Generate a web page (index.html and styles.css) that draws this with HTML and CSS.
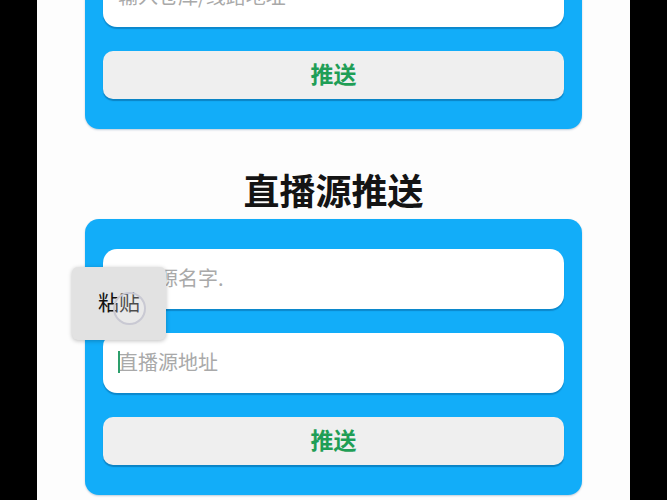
FILE: index.html
```html
<!DOCTYPE html>
<html lang="zh">
<head>
<meta charset="utf-8">
<link rel="stylesheet" href="styles.css">
</head>
<body>
<div class="screen">
  <div class="page">
    <section class="card">
      <input class="field" type="text" placeholder="输入仓库/线路地址">
      <button class="push">推送</button>
    </section>
    <h2 class="title">直播源推送</h2>
    <section class="card">
      <input class="field" type="text" placeholder="直播源名字.">
      <div class="field-wrap">
        <input class="field" type="text" placeholder="直播源地址">
        <span class="caret"></span>
      </div>
      <button class="push">推送</button>
    </section>
  </div>
  <div class="paste-menu">粘贴</div>
  <div class="touch"></div>
</div>
</body>
</html>
```
FILE: styles.css
```css
html, body {
  margin: 0;
  padding: 0;
  background: #000;
  height: 100%;
  overflow: hidden;
}
body {
  font-family: "Noto Sans CJK SC", "Noto Sans", sans-serif;
}
.screen {
  position: relative;
  width: 593px;
  height: 500px;
  margin-left: 37px;
  background: #fdfdfd;
  overflow: hidden;
}
.page {
  margin-top: -63px;
  display: flex;
  flex-direction: column;
  align-items: center;
}
.card {
  width: 497px;
  box-sizing: border-box;
  background: #12adf9;
  border-radius: 14px;
  padding: 30px 18px;
  display: flex;
  flex-direction: column;
  gap: 24px;
  box-shadow: 0 1px 2px rgba(0, 60, 110, 0.25);
}
.field-wrap {
  position: relative;
}
.field {
  display: block;
  width: 100%;
  height: 60px;
  box-sizing: border-box;
  border: none;
  outline: none;
  background: #fff;
  border-radius: 14px;
  padding: 0 15px 4px;
  font-family: inherit;
  font-size: 20px;
  color: #333;
  box-shadow: 0 2px 1px rgba(0, 70, 120, 0.35);
}
.field::placeholder {
  color: #a9a9a9;
}
.caret {
  position: absolute;
  left: 15px;
  top: 18px;
  width: 2px;
  height: 22px;
  background: #2d9f6c;
}
.push {
  height: 48px;
  border: none;
  border-radius: 10px;
  background: #efefef;
  color: #1f9e56;
  font-family: inherit;
  font-size: 23px;
  font-weight: 700;
  padding: 0 0 5px;
  box-shadow: 0 2px 1px rgba(0, 70, 120, 0.4);
}
.title {
  margin: 35px 0 5px;
  height: 50px;
  line-height: 50px;
  font-size: 36px;
  font-weight: 700;
  color: #141414;
}
.paste-menu {
  position: absolute;
  left: 35px;
  top: 267px;
  width: 94px;
  height: 73px;
  box-sizing: border-box;
  padding-bottom: 5px;
  background: #e2e2e2;
  border-radius: 6px;
  box-shadow: 0 1px 4px rgba(0, 0, 0, 0.25);
  display: flex;
  align-items: center;
  justify-content: center;
  font-size: 21px;
  color: #111;
}
.touch {
  position: absolute;
  left: 76px;
  top: 292px;
  width: 29px;
  height: 29px;
  border-radius: 50%;
  border: 2px solid #c9c9d3;
  background: rgba(255, 255, 255, 0.25);
}
```
